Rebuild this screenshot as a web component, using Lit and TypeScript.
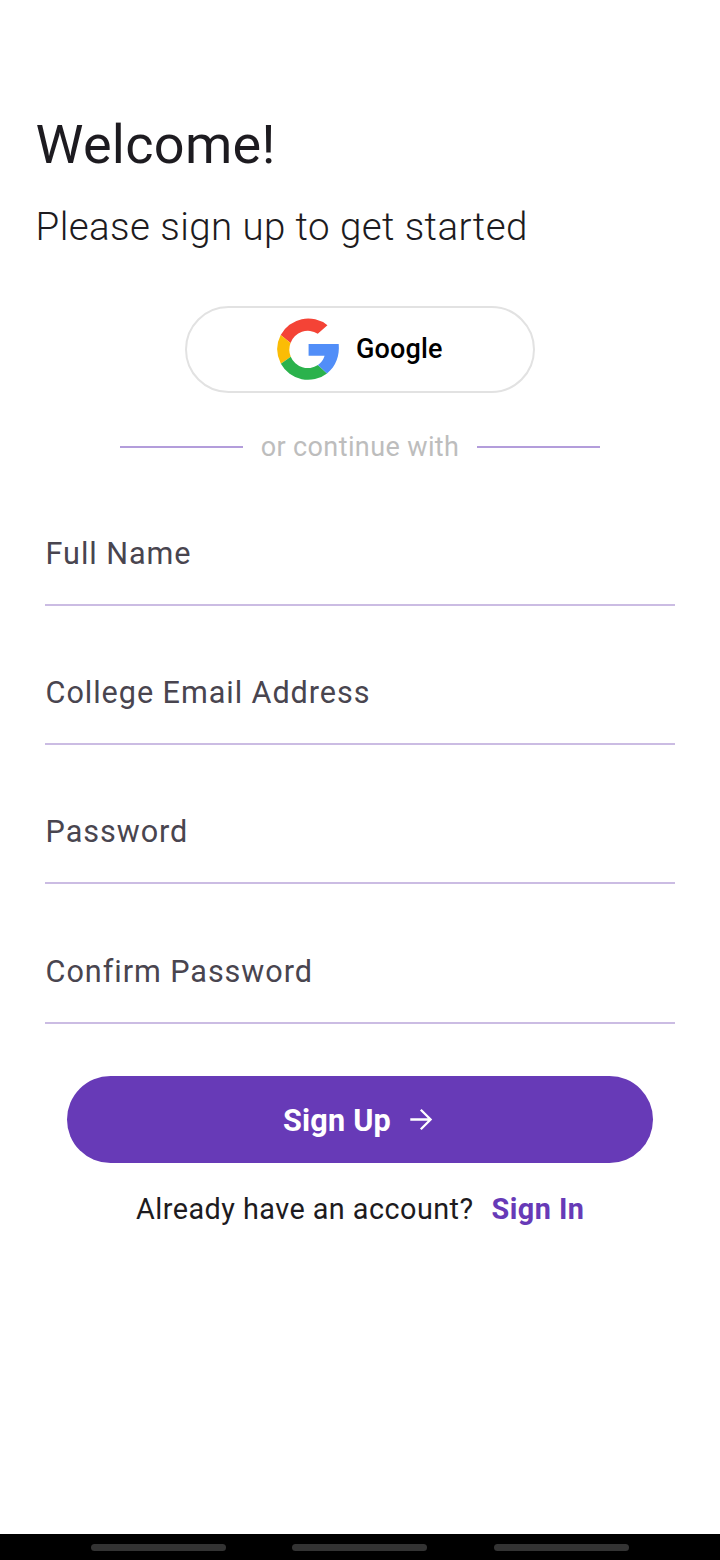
import { LitElement, html, css, svg } from "lit";
import { customElement, property } from "lit/decorators.js";

const googleMark = svg`
  <path fill="#f44336" d="M11 25.2A30.8 30.8 0 0 1 57.4 15.4L47.8 23.8A18.4 18.4 0 0 0 20.8 33Z"/>
  <path fill="#fbbc05" d="M11 25.2A30.8 30.8 0 0 0 11.2 53.6L21 46.6A18.4 18.4 0 0 1 20.8 33Z"/>
  <path fill="#2bb24c" d="M11.2 53.6A30.8 30.8 0 0 0 57 63.2L48 55A18.4 18.4 0 0 1 21 46.6Z"/>
  <path fill="#518ef8" d="M38.7 34H68.6C69.6 45.5 66 56 57 63.2L48 55Q52.8 51.6 54.6 45.8H38.7Z"/>`;

@customElement("line-field")
export class LineField extends LitElement {
  @property() label = "";

  static styles = css`
    :host {
      display: block;
      box-sizing: border-box;
      height: 139.3px;
    }
    .label {
      height: 101.8px;
      padding-left: 0.6px;
      box-sizing: border-box;
      padding-top: 29.8px;
      line-height: 40px;
      font-size: 30.6px;
      letter-spacing: 0.94px;
      color: #49454f;
      border-bottom: 2px solid #cbbce3;
    }
  `;

  render() {
    return html`<div class="label">${this.label}</div>`;
  }
}

@customElement("app-root")
export class AppRoot extends LitElement {
  static styles = css`
    :host {
      display: flex;
      flex-direction: column;
      height: 1560px;
      background: #fff;
      font-family: Roboto, sans-serif;
      color: #1d1b20;
      white-space: nowrap;
    }
    .page {
      flex: 1;
      display: flex;
      flex-direction: column;
      box-sizing: border-box;
      padding-top: 113px;
    }
    h1,
    h2 {
      margin: 0 0 0 35.5px;
    }
    h1 {
      font-size: 54px;
      line-height: 64px;
      font-weight: 400;
      letter-spacing: 0.3px;
    }
    h2 {
      margin-top: 27px;
      font-size: 38.5px;
      line-height: 46px;
      font-weight: 300;
      letter-spacing: 0.43px;
    }
    .google {
      box-sizing: border-box;
      width: 350px;
      height: 87px;
      margin: 56px auto 0;
      border: 2px solid #e2e2e2;
      border-radius: 44px;
      display: flex;
      align-items: center;
      padding: 0 0 0 83px;
      gap: 6px;
      font-size: 27px;
      font-weight: 500;
      letter-spacing: 0.18px;
      color: #000;
    }
    .google svg {
      width: 80px;
      height: 80px;
    }
    .google span {
      padding-bottom: 2px;
    }
    .divider {
      width: 479.5px;
      margin: 34px auto 0;
      height: 40px;
      display: flex;
      align-items: center;
      justify-content: space-between;
      font-size: 27px;
      letter-spacing: 0.39px;
      color: #bdbdbd;
    }
    .rule {
      width: 122.5px;
      height: 2px;
      background: #b39ddb;
    }
    .form {
      margin: 37px 45px 0;
    }
    .signup {
      width: 586px;
      height: 87px;
      margin: 15px auto 0;
      border-radius: 44px;
      background: #673ab7;
      color: #fff;
      display: flex;
      align-items: center;
      justify-content: center;
      gap: 14px;
      font-size: 30.6px;
      font-weight: 700;
      letter-spacing: 0.2px;
    }
    .signup span {
      padding-top: 1px;
    }
    .signup svg {
      width: 32px;
      height: 32px;
    }
    .signin {
      margin-top: 26px;
      line-height: 40px;
      display: flex;
      justify-content: center;
      gap: 18px;
      padding-left: 0.5px;
      font-size: 28.8px;
      letter-spacing: 0.46px;
    }
    .link {
      font-weight: 700;
      color: #673ab7;
    }
    .navbar {
      height: 26px;
      background: #000;
      display: flex;
      align-items: center;
      justify-content: center;
      box-sizing: border-box;
      padding-right: 0.4px;
      gap: 66.5px;
    }
    .pill {
      width: 135px;
      height: 7px;
      border-radius: 4px;
      background: #333;
    }
  `;

  render() {
    return html`
      <div class="page">
        <h1>Welcome!</h1>
        <h2>Please sign up to get started</h2>
        <div class="google">
          <svg viewBox="0.4 0.3 79.4 79.4">${googleMark}</svg>
          <span>Google</span>
        </div>
        <div class="divider">
          <div class="rule"></div>
          <span>or continue with</span>
          <div class="rule"></div>
        </div>
        <div class="form">
          ${["Full Name", "College Email Address", "Password", "Confirm Password"].map(
            (label) => html`<line-field label=${label}></line-field>`
          )}
        </div>
        <div class="signup">
          <span>Sign Up</span>
          <svg viewBox="0 0 32 32" fill="none" stroke="#fff" stroke-width="2.3">
            <path d="M5.3 15.5H25.8M15.8 5.7L25.6 15.5L15.8 25.3" />
          </svg>
        </div>
        <div class="signin">
          <span>Already have an account?</span>
          <span class="link">Sign In</span>
        </div>
      </div>
      <div class="navbar">
        <div class="pill"></div>
        <div class="pill"></div>
        <div class="pill"></div>
      </div>
    `;
  }
}
